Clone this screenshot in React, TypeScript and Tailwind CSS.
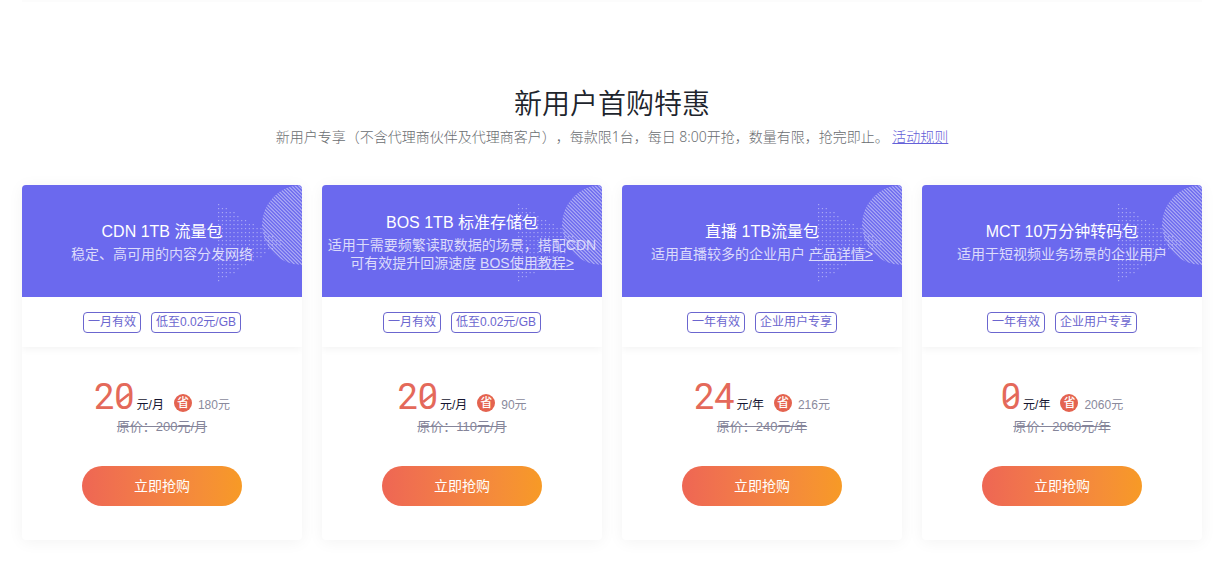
import React from "react";

type Plan = {
  title: string;
  desc: string;
  link?: string;
  tags: string[];
  price: string;
  unit: string;
  save: string;
  original: string;
};

const plans: Plan[] = [
  {
    title: "CDN 1TB 流量包",
    desc: "稳定、高可用的内容分发网络",
    tags: ["一月有效", "低至0.02元/GB"],
    price: "20",
    unit: "元/月",
    save: "180元",
    original: "原价：200元/月",
  },
  {
    title: "BOS 1TB 标准存储包",
    desc: "适用于需要频繁读取数据的场景，搭配CDN可有效提升回源速度",
    link: "BOS使用教程>",
    tags: ["一月有效", "低至0.02元/GB"],
    price: "20",
    unit: "元/月",
    save: "90元",
    original: "原价：110元/月",
  },
  {
    title: "直播 1TB流量包",
    desc: "适用直播较多的企业用户",
    link: "产品详情>",
    tags: ["一年有效", "企业用户专享"],
    price: "24",
    unit: "元/年",
    save: "216元",
    original: "原价：240元/年",
  },
  {
    title: "MCT 10万分钟转码包",
    desc: "适用于短视频业务场景的企业用户",
    tags: ["一年有效", "企业用户专享"],
    price: "0",
    unit: "元/年",
    save: "2060元",
    original: "原价：2060元/年",
  },
];

const COLUMNS = 18;
const dots: { x: number; y: number }[] = [];
for (let c = 0; c < COLUMNS; c++) {
  const half = 39 - c * 2.25;
  for (let r = 0; r < 20; r++) {
    const dy = -38 + r * 4;
    if (Math.abs(dy) <= half) dots.push({ x: 6 + c * 3.85, y: 57 + dy });
  }
}

function Decoration() {
  const id = React.useId();
  return (
    <svg className="absolute top-0 right-0" width="90" height="112" viewBox="0 0 90 112" aria-hidden="true">
      <defs>
        <clipPath id={id}>
          <circle cx="90" cy="40" r="40" />
        </clipPath>
      </defs>
      <g fill="#fff" fillOpacity="0.42">
        {dots.map((d) => (
          <rect key={`${d.x}-${d.y}`} x={d.x} y={d.y} width="1.2" height="1.2" />
        ))}
      </g>
      <g clipPath={`url(#${id})`} stroke="#fff" strokeOpacity="0.46" strokeWidth="1.15">
        {Array.from({ length: 50 }, (_, i) => (
          <line key={i} x1={-40 + i * 3.6} y1="0" x2={40 + i * 3.6} y2="80" />
        ))}
      </g>
    </svg>
  );
}

function Price({ value }: { value: string }) {
  return (
    <span className="font-[Roboto,sans-serif] text-4xl leading-9 text-[#e4695a]">
      {value.split("").map((ch, i) => (
        <span key={i} className="relative inline-block">
          {ch}
          {ch === "0" && (
            <svg className="absolute inset-0 h-full w-full" viewBox="0 0 20 36" aria-hidden="true">
              <path d="M5 23L15 15" stroke="currentColor" strokeWidth="2.6" />
            </svg>
          )}
        </span>
      ))}
    </span>
  );
}

function Card({ plan }: { plan: Plan }) {
  return (
    <article className="overflow-hidden rounded bg-white text-center shadow-[0_2px_16px_rgba(0,0,0,0.05)]">
      <header className="relative flex h-28 flex-col items-center justify-center bg-[#6b69ee] px-1">
        <Decoration />
        <h3 className="relative mb-px text-base leading-6 text-white">{plan.title}</h3>
        <p className="relative text-sm leading-[18px] text-[#dcdbfb]">
          {plan.desc}
          {plan.link && (
            <>
              {" "}
              <a href="#detail" className="underline">
                {plan.link}
              </a>
            </>
          )}
        </p>
      </header>
      <ul className="flex h-[50px] items-start justify-center gap-2.5 pt-[15px] shadow-[0_2px_8px_rgba(0,0,0,0.05)]">
        {plan.tags.map((tag) => (
          <li key={tag} className="rounded-sm border border-[#6b66cf] px-1 text-xs leading-[19px] text-[#6b66cf]">
            {tag}
          </li>
        ))}
      </ul>
      <div className="px-4 pt-8 pb-[34px]">
        <div className="flex items-baseline justify-center text-xs">
          <Price value={plan.price} />
          <span className="ml-0.5 text-[#151530]">{plan.unit}</span>
          <span className="mr-1.5 mb-[3px] ml-2.5 size-[18px] self-end rounded-full bg-[#e4634f] text-xs leading-[18px] font-medium text-white">
            省
          </span>
          <span className="text-[#8a8a9c]">{plan.save}</span>
        </div>
        <del className="mt-0.5 block text-[13px] leading-5 text-[#85859a]">{plan.original}</del>
        <button
          type="button"
          className="mt-[29px] h-10 w-40 rounded-full bg-linear-to-r from-[#ee6654] to-[#f79a25] text-sm text-white"
        >
          立即抢购
        </button>
      </div>
    </article>
  );
}

export default function App() {
  return (
    <main className="bg-white pr-6 pb-6 pl-[22px] font-['Liberation_Sans','Noto_Sans_CJK_SC',sans-serif]">
      <div className="h-0.5 bg-[#fcfcfc]" />
      <section className="pt-[83px]">
        <h2 className="text-center text-[28px] leading-10 font-[350] text-[#20242c]">新用户首购特惠</h2>
        <p className="mt-0.5 text-center font-['Noto_Sans','Noto_Sans_CJK_SC',sans-serif] text-sm leading-5 font-light text-[#6a6d71] [text-spacing-trim:space-all]">
          新用户专享（不含代理商伙伴及代理商客户），每款限1台，每日 8:00开抢，数量有限，抢完即止。{" "}
          <a href="#rules" className="text-[#6560d8] underline">
            活动规则
          </a>
        </p>
        <div className="mt-[38px] grid grid-cols-[repeat(auto-fit,minmax(260px,1fr))] gap-5">
          {plans.map((plan) => (
            <Card key={plan.title} plan={plan} />
          ))}
        </div>
      </section>
    </main>
  );
}
